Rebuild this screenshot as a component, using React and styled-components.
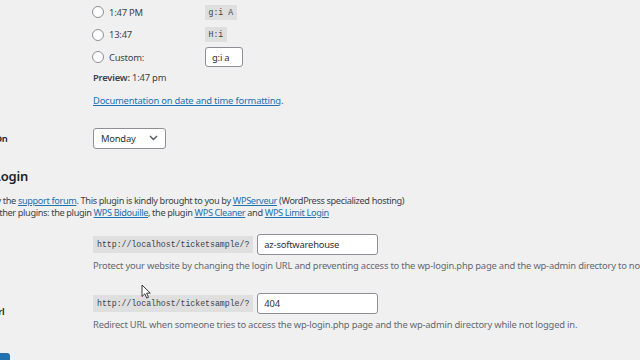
import styled, { createGlobalStyle } from 'styled-components';

const GlobalStyle = createGlobalStyle`
  html, body { margin: 0; padding: 0; background: #f0f0f1; }
  body {
    font-family: "Noto Sans", "Open Sans", sans-serif;
    font-size: 9.4px;
    letter-spacing: -0.2px;
    color: #3c434a;
  }
`;

const Viewport = styled.div`
  position: relative;
  width: 640px;
  height: 360px;
  overflow: hidden;
`;

const Content = styled.div`
  margin-left: -68px;
  width: 820px;
`;

const Row = styled.div`
  display: flex;
  align-items: flex-start;
`;

const Th = styled.div`
  box-sizing: border-box;
  flex: 0 0 161px;
  padding-top: ${p => p.$top || 0}px;
  padding-left: 8px;
  font-weight: 600;
  color: #1d2327;
  white-space: nowrap;
`;

const Td = styled.div`
  flex: 1;
  padding: ${p => p.$pad || '11px 0'};
  white-space: nowrap;
`;

const RadioRow = styled.div`
  display: grid;
  grid-template-columns: 112px auto;
  align-items: center;
  height: 22.5px;
`;

const RadioLabel = styled.label`
  display: flex;
  align-items: center;
  gap: 5px;
`;

const Radio = styled.span`
  width: 10px;
  height: 10px;
  border: 1px solid #8c8f94;
  border-radius: 50%;
  background: #fff;
  margin-left: -1px;
`;

const Code = styled.code`
  justify-self: start;
  font-family: "Liberation Mono", monospace;
  font-size: 8.2px;
  letter-spacing: 0;
  background: rgba(0, 0, 0, 0.07);
  padding: ${p => p.$big ? '4px 4px' : '3px 3.5px'};
  color: #3c434a;
`;

const Input = styled.div`
  box-sizing: border-box;
  width: ${p => p.$w}px;
  height: ${p => p.$h || 20}px;
  background: #fff;
  border: 1px solid #8c8f94;
  border-radius: 3px;
  padding: 0 6px;
  display: flex;
  align-items: center;
  color: #2c3338;
  justify-self: start;
`;

const Preview = styled.p`
  margin: 2px 0 0;
  line-height: 14px;
  b { font-weight: 600; color: #3c434a; }
`;

const Link = styled.a`
  color: #2271b1;
  text-decoration: underline;
  text-underline-offset: 1px;
`;

const DocLine = styled.p`
  margin: 9px 0 0;
  line-height: 14px;
`;

const Select = styled.div`
  box-sizing: border-box;
  width: 73px;
  height: 21px;
  background: #fff;
  border: 1px solid #8c8f94;
  border-radius: 3px;
  padding: 0 7px;
  display: flex;
  align-items: center;
  justify-content: space-between;
  color: #2c3338;
`;

const Heading = styled.h2`
  margin: 8px 0 0;
  font-size: 13px;
  line-height: 17px;
  font-weight: 600;
  color: #1d2327;
`;

const Intro = styled.p`
  margin: 10px 0 0 10px;
  font-size: 9.2px;
  letter-spacing: -0.36px;
  line-height: 12.5px;
`;

const FieldLine = styled.div`
  display: flex;
  align-items: center;
  gap: 4px;
`;

const Desc = styled.p`
  margin: 4px 0 0;
  line-height: 14px;
  color: #646970;
`;

const SaveButton = styled.div`
  margin: 21px 0 0;
  width: 78px;
  height: 22px;
  background: #2271b1;
  border-radius: 3px;
`;

const Cursor = styled.svg`
  position: absolute;
  left: 141px;
  top: 284px;
`;

const Chevron = () => (
  <svg width="9" height="6" viewBox="0 0 9 6">
    <path d="M1 1l3.5 3.5L8 1" fill="none" stroke="#50575e" strokeWidth="1.4" />
  </svg>
);

export default function App() {
  return (
    <Viewport>
      <GlobalStyle />
      <Content>
        <Row>
          <Th />
          <Td $pad="1px 0 0">
            <RadioRow>
              <RadioLabel><Radio />1:47 PM</RadioLabel>
              <Code>g:i A</Code>
            </RadioRow>
            <RadioRow>
              <RadioLabel><Radio />13:47</RadioLabel>
              <Code>H:i</Code>
            </RadioRow>
            <RadioRow>
              <RadioLabel><Radio />Custom:</RadioLabel>
              <Input $w={38}>g:i a</Input>
            </RadioRow>
            <Preview><b>Preview:</b> 1:47 pm</Preview>
            <DocLine><Link>Documentation on date and time formatting</Link>.</DocLine>
          </Td>
        </Row>
        <Row>
          <Th $top={24}>Week Starts On</Th>
          <Td $pad="20px 0 11px">
            <Select>Monday<Chevron /></Select>
          </Td>
        </Row>

        <Heading>WPS Hide Login</Heading>
        <Intro>
          Need help? Try the <Link>support forum</Link>. This plugin is kindly brought to you by <Link>WPServeur</Link> (WordPress specialized hosting)
          <br />
          Discover our other plugins: the plugin <Link>WPS Bidouille</Link>, the plugin <Link>WPS Cleaner</Link> and <Link>WPS Limit Login</Link>
        </Intro>

        <Row>
          <Th $top={32}>Login url</Th>
          <Td $pad="14px 0 0">
            <FieldLine>
              <Code $big>http://localhost/ticketsample/?</Code>
              <Input $w={121} $h={21}>az-softwarehouse</Input>
            </FieldLine>
            <Desc>Protect your website by changing the login URL and preventing access to the wp-login.php page and the wp-admin directory to non-connected people.</Desc>
          </Td>
        </Row>
        <Row>
          <Th $top={32}>Redirection url</Th>
          <Td $pad="20px 0 0">
            <FieldLine>
              <Code $big>http://localhost/ticketsample/?</Code>
              <Input $w={121} $h={21}>404</Input>
            </FieldLine>
            <Desc>Redirect URL when someone tries to access the wp-login.php page and the wp-admin directory while not logged in.</Desc>
          </Td>
        </Row>
        <SaveButton />
      </Content>
      <Cursor width="10" height="15" viewBox="0 0 10 15">
        <path d="M1 1v11.5l2.8-2.7 1.9 4.3 1.8-.8-1.9-4.2H9.3z" fill="#fff" stroke="#222" strokeWidth="0.9" strokeLinejoin="round" />
      </Cursor>
    </Viewport>
  );
}
